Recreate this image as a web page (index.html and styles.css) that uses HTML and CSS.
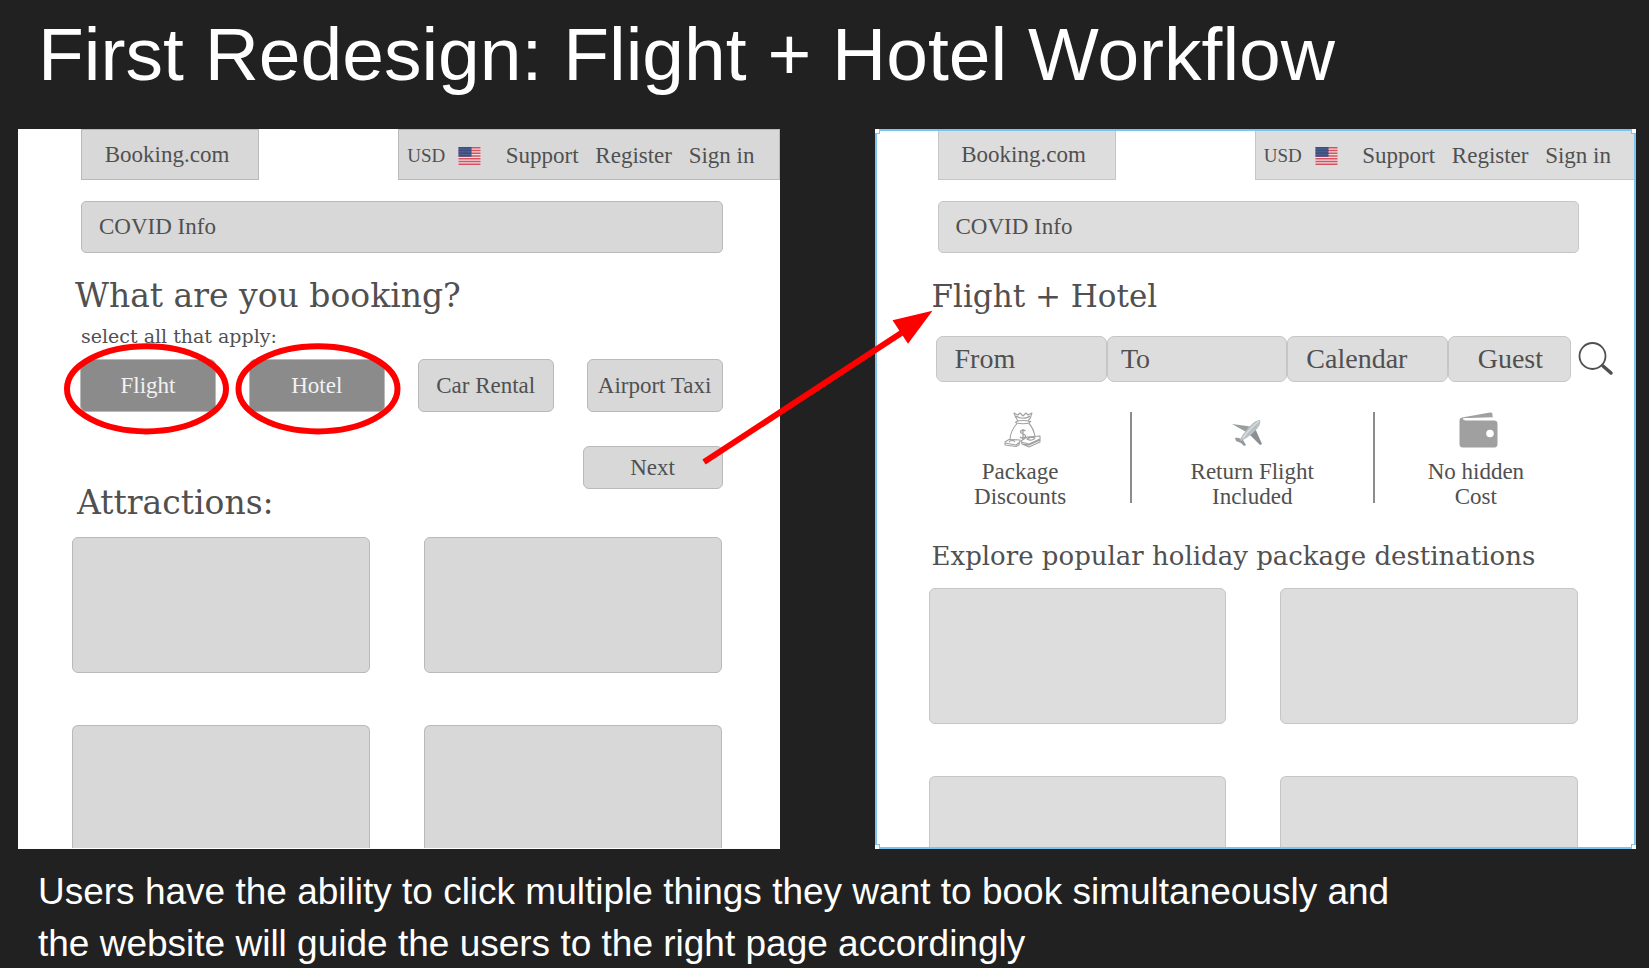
FILE: index.html
```html
<!DOCTYPE html>
<html lang="en">
<head>
<meta charset="utf-8">
<meta name="viewport" content="width=device-width, initial-scale=1">
<title>First Redesign: Flight + Hotel Workflow</title>
<link rel="stylesheet" href="styles.css">
</head>
<body>
<svg class="defs" width="0" height="0" aria-hidden="true">
  <symbol id="flag" viewBox="0 0 22 18">
    <rect width="22" height="18" fill="#f1dcdf"/>
    <path d="M0 .7h22M0 3.5h22M0 6.2h22M0 9h22M0 11.8h22M0 14.5h22M0 17.3h22" stroke="#d4525f" stroke-width="1.4"/>
    <rect width="13" height="9.7" fill="#3b4f80"/>
    <path d="M1 2h11M1 4.8h11M1 7.6h11" stroke="#7484a8" stroke-width=".8" stroke-dasharray="1 1"/>
  </symbol>
</svg>
<main class="slide">
  <h1 class="slide-title">First Redesign: Flight + Hotel Workflow</h1>
  <div class="boards">
    <section class="board" aria-label="Booking selection">
      <header class="top">
        <a class="brand" href="#">Booking.com</a>
        <nav class="menu">
          <a class="currency" href="#">USD <svg class="flag" role="img" aria-label="United States"><use href="#flag"/></svg></a>
          <a href="#">Support</a><a href="#">Register</a><a href="#">Sign in</a>
        </nav>
      </header>
      <a class="notice" href="#">COVID Info</a>
      <h2 class="heading">What are you booking?</h2>
      <p class="hint">select all that apply:</p>
      <div class="choices">
        <button class="choice chosen" type="button" aria-pressed="true">Flight</button>
        <button class="choice chosen" type="button" aria-pressed="true">Hotel</button>
        <button class="choice" type="button">Car Rental</button>
        <button class="choice" type="button">Airport Taxi</button>
      </div>
      <div class="next-row"><button class="next" type="button">Next</button></div>
      <h2 class="heading attractions">Attractions:</h2>
      <div class="cards">
        <div class="card"></div><div class="card"></div>
        <div class="card cut"></div><div class="card cut"></div>
      </div>
    </section>

    <section class="board selected" aria-label="Flight and hotel search">
      <header class="top">
        <a class="brand" href="#">Booking.com</a>
        <nav class="menu">
          <a class="currency" href="#">USD <svg class="flag" role="img" aria-label="United States"><use href="#flag"/></svg></a>
          <a href="#">Support</a><a href="#">Register</a><a href="#">Sign in</a>
        </nav>
      </header>
      <a class="notice" href="#">COVID Info</a>
      <h2 class="heading">Flight + Hotel</h2>
      <form class="search">
        <input class="field" type="text" placeholder="From" aria-label="From">
        <input class="field to" type="text" placeholder="To" aria-label="To">
        <button class="field" type="button">Calendar</button>
        <button class="field guest" type="button">Guest</button>
        <button class="go" type="button" aria-label="Search">
          <svg class="go-icon" viewBox="0 0 36 34" fill="none" stroke="#505050">
            <circle cx="14.5" cy="14" r="13" stroke-width="1.8"/>
            <path d="M23.5 22.500l2 2" stroke-width="2"/>
            <path d="M25 24l8 7" stroke-width="3.5" stroke-linecap="round"/>
          </svg>
        </button>
      </form>
      <ul class="perks">
        <li class="perk">
          <svg class="perk-icon" viewBox="-3 0 38 36" fill="none" stroke="#a0a0a0" stroke-width="1.1" stroke-linejoin="round">
            <path d="M14 9C12 6 10.500 3 10 1l4 2 2-2 3 3 3-3 2 2 4-2c-.500 3-2 6-4 8"/>
            <path d="M12 4c3 3 11 3 14 0M12 9.500c4-1.200 10-1.200 14 0M12 11c5 1 9 1 14 0M11 10l2 1M27 9l-2 2"/>
            <path d="M13 11.500C9 16 6 22 6 28M25 11.500c3 3 5 8 6 13"/>
            <path d="M21.500 19c-1.500-1.500-5-1-5 1s5 1.500 5 4-4 2.500-5.500 1M19 17v11" stroke-width="1.3"/>
            <path d="M1 30l4-2.500 11 .500-1 5-3 1.500L1 33zM1 31l11 2 4-3M5 30c2-2 5-2 6 0" fill="#fff"/>
            <path d="M17 29l6-4 13-1v6l-11 5-7-3zM17 30l8 2 11-5M18 32l7 1 11-5M23 27c2-2 7-2 8-1-1 2-5 3-8 1z" fill="#fff"/>
          </svg>
          <span>Package<br>Discounts</span>
        </li>
        <li class="perk">
          <svg class="perk-icon" viewBox="6 0 38 36">
            <path d="M5 12l15 2 5 1-4 6z" fill="#9a9d9f"/>
            <path d="M27 14l8 18-2 1-12-12z" fill="#8c8f91"/>
            <path d="M8 26c3-1 6 1 8 2l3 5-2 1-3-3-5-2z" fill="#97999b"/>
            <path d="M33 8c-3-.500-6 2-9 5-4 4-9 10-11 15l1 1c5-2 11-7 15-11 3-3 5-7 4-10z" fill="#b9bfc3"/>
            <path d="M32 9c-6 5-12 11-16 17" fill="none" stroke="#d8dde0" stroke-width="1.5"/>
          </svg>
          <span>Return Flight<br>Included</span>
        </li>
        <li class="perk">
          <svg class="perk-icon" viewBox="-2 0 38 36">
            <path d="M3 5.500L31 .500c1.500-.300 2.500.500 2.500 2V6H6c-1 0-1 2 0 2.500h29c2 0 3.500 1 3.500 3V32c0 2-1 3.500-3 3.500H3.500C1.500 35.500.500 34 .500 32V9C.500 7 1 6 3 5.500z" fill="#a0a0a0"/>
            <path d="M4 6.200l29-1v2.600H5.500C4 7.800 3.500 7 4 6.200z" fill="#fff"/>
            <circle cx="31" cy="21.5" r="3.8" fill="#fff"/>
          </svg>
          <span>No hidden<br>Cost</span>
        </li>
      </ul>
      <h3 class="explore">Explore popular holiday package destinations</h3>
      <div class="cards">
        <div class="card"></div><div class="card"></div>
        <div class="card cut"></div><div class="card cut"></div>
      </div>
      <i class="handle tl"></i><i class="handle tr"></i><i class="handle bl"></i><i class="handle br"></i>
    </section>

    <svg class="marks" viewBox="0 0 1618 719" preserveAspectRatio="none" aria-hidden="true">
      <g fill="none" stroke="#f00" stroke-width="6">
        <ellipse cx="128.5" cy="259.5" rx="79.5" ry="42.5"/>
        <ellipse cx="300" cy="259.5" rx="79.5" ry="42.5"/>
        <path d="M686 332.500L886 202"/>
      </g>
      <path d="M914.500 181.500L874.500 191L890 214.500z" fill="#f00"/>
    </svg>
  </div>
  <p class="caption">Users have the ability to click multiple things they want to book simultaneously and the website will guide the users to the right page accordingly</p>
</main>
</body>
</html>
```

FILE: styles.css
```css
* { box-sizing: border-box; }

body {
  margin: 0;
  background: #212121;
  color: #fff;
  font-family: "Liberation Sans", Arial, sans-serif;
}

.defs { position: absolute; }

.slide { padding: 11px 13px 0 18px; }

.slide-title {
  margin: 0 20px 32px;
  font-size: 75px;
  font-weight: 400;
  line-height: 86px;
}

.boards {
  position: relative;
  display: grid;
  grid-template-columns: 1fr 1fr;
  column-gap: 95px;
}

.board {
  --fill: #d8d8d8;
  --line: #b9b9b9;
  position: relative;
  background: #fff;
  color: #505050;
  font-family: "Liberation Serif", "Times New Roman", serif;
  font-size: 23px;
}

.selected {
  --fill: #ddd;
  --line: #c6c6c6;
}

.selected::after {
  content: "";
  position: absolute;
  inset: 0;
  border: 2px solid #7cc4ef;
  pointer-events: none;
}

.handle {
  position: absolute;
  z-index: 1;
  width: 5px;
  height: 5px;
  background: #fff;
  border: 0 solid #7cc4ef;
}
.tl { top: 0; left: 0; border-width: 0 1px 1px 0; }
.tr { top: 0; right: 0; border-width: 0 0 1px 1px; }
.bl { bottom: 0; left: 0; border-width: 1px 1px 0 0; }
.br { bottom: 0; right: 0; border-width: 1px 0 0 1px; }

a { color: inherit; text-decoration: none; }

button, input {
  margin: 0;
  padding: 0;
  color: inherit;
  font: inherit;
}

.top {
  display: grid;
  grid-template-columns: 178fr 381fr;
  column-gap: 139px;
  padding-left: 63px;
}

.brand, .menu {
  display: flex;
  align-items: center;
  height: 51px;
  border: 1px solid var(--line);
  background: var(--fill);
}

.brand { justify-content: center; padding-right: 6px; }

.menu {
  justify-content: space-between;
  padding: 3px 24px 0 8px;
}

.currency {
  display: flex;
  align-items: center;
  gap: 13px;
  margin-right: 8px;
  font-size: 19px;
}

.flag { width: 23px; height: 18px; }

.notice {
  display: flex;
  align-items: center;
  height: 52px;
  margin: 21px 57px 0 63px;
  padding-left: 17px;
  border: 1px solid var(--line);
  border-radius: 5px;
  background: var(--fill);
}

.heading {
  margin: 23px 0 0 57px;
  font-family: "DejaVu Serif", serif;
  font-size: 33px;
  font-weight: 400;
  line-height: 40px;
}

.selected .heading { font-size: 31px; }

.hint {
  margin: 8px 0 0 63px;
  font-family: "DejaVu Serif", serif;
  font-size: 19px;
  line-height: 24px;
}

.choices {
  display: grid;
  grid-template-columns: repeat(4, 1fr);
  column-gap: 33px;
  margin: 11px 57px 0 62px;
}

.choice, .next {
  height: 53px;
  border: 1px solid var(--line);
  border-radius: 6px;
  background: var(--fill);
  white-space: nowrap;
}

.chosen { background: #8b8b8b; color: #f2f2f2; }

.next-row {
  display: flex;
  justify-content: flex-end;
  margin: 34px 57px 0;
}

.next { width: 140px; height: 43px; }

.attractions { margin: -6px 0 0 59px; }

.cards {
  display: grid;
  grid-template-columns: 1fr 1fr;
  gap: 52px 54px;
  margin: 14px 58px 0 54px;
}

.card {
  height: 136px;
  border: 1px solid var(--line);
  border-radius: 6px;
  background: var(--fill);
}

.cut {
  height: 123px;
  border-bottom: 0;
  border-radius: 6px 6px 0 0;
}

.search {
  display: grid;
  grid-template-columns: 171fr 180fr 160fr 123fr 46px;
  margin: 20px 19px 0 61px;
}

.field {
  width: 100%;
  height: 46px;
  padding: 0 18px;
  border: 1px solid var(--line);
  border-radius: 7px;
  background: var(--fill);
  font-size: 28px;
  text-align: left;
}
.field::placeholder { color: inherit; opacity: 1; }
.to { padding-left: 13px; }
.guest { padding-left: 29px; }

.go { border: 0; background: none; }
.go-icon { display: block; width: 36px; height: 34px; margin-left: 7px; }

.perks {
  display: grid;
  grid-template-columns: 220fr 244fr 205fr;
  margin: 30px 59px 0 36px;
  padding: 0;
  list-style: none;
}

.perk {
  display: flex;
  flex-direction: column;
  align-items: center;
  gap: 11px;
  height: 91px;
  line-height: 25px;
  text-align: center;
}
.perk + .perk { border-left: 2px solid #8c8c8c; }
.perk-icon { flex: none; width: 38px; height: 36px; overflow: visible; }

.explore {
  margin: 37px 0 0 57px;
  font-family: "DejaVu Serif", serif;
  font-size: 26px;
  font-weight: 400;
  line-height: 32px;
  white-space: nowrap;
}

.selected .cards { margin-top: 16px; }
.selected .cut { height: 73px; }

.marks {
  position: absolute;
  z-index: 2;
  inset: 0;
  width: 100%;
  height: 100%;
  pointer-events: none;
}

.caption {
  max-width: 1400px;
  margin: 17px 20px 0;
  font-size: 37px;
  line-height: 52px;
}
```
